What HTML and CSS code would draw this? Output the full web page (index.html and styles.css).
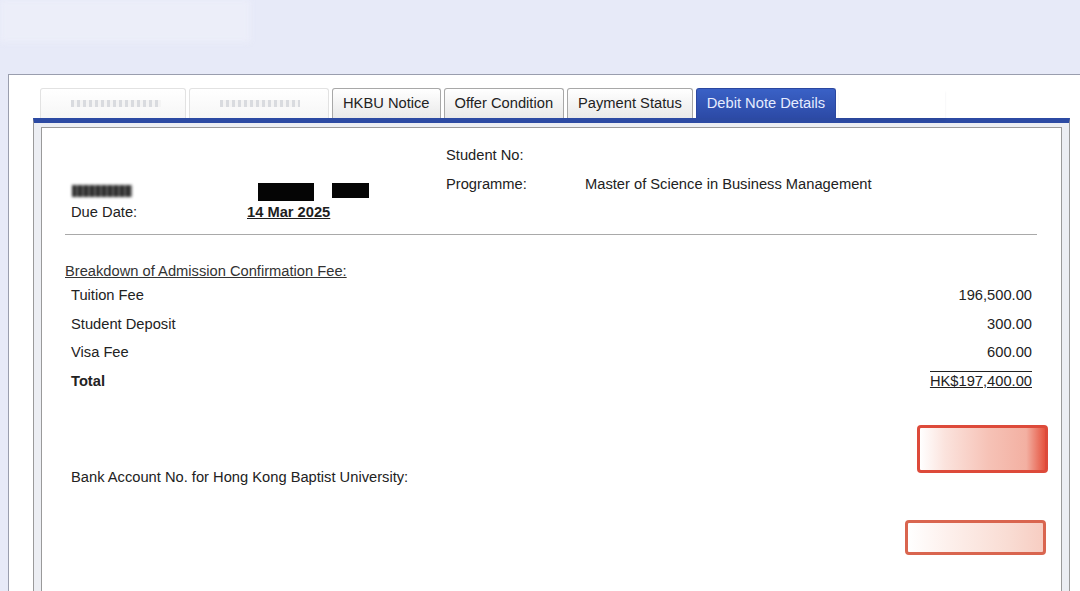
FILE: index.html
```html
<!DOCTYPE html>
<html lang="en">
<head>
  <meta charset="UTF-8">
  <meta name="viewport" content="width=device-width, initial-scale=1.0">
  <title>Debit Note Details</title>
  <link rel="stylesheet" href="styles.css">
</head>
<body>
  <div class="top">
    <div class="top-patch"></div>
  </div>

  <div class="frame">
    <div class="tabs">
      <span class="tab tab-hidden"><i class="smudge w90"></i></span>
      <span class="tab tab-hidden"><i class="smudge w80"></i></span>
      <span class="tab">HKBU Notice</span>
      <span class="tab">Offer Condition</span>
      <span class="tab">Payment Status</span>
      <span class="tab active">Debit Note Details</span>
      <span class="tab-ghost"></span>
    </div>

    <div class="tab-content">
      <div class="panel">
        <div class="head">
          <div class="head-left">
            <div class="head-row">
              <div class="name-blur"></div>
              <div class="redacts">
                <span class="redact r1"></span>
                <span class="redact r2"></span>
              </div>
            </div>
            <div class="head-row due">
              <span class="label">Due Date:</span>
              <span class="date">14 Mar 2025</span>
            </div>
          </div>
          <div class="head-right">
            <div class="info-row"><span class="info-label">Student No:</span><span></span></div>
            <div class="info-row"><span class="info-label">Programme:</span><span>Master of Science in Business Management</span></div>
          </div>
        </div>

        <hr class="rule">

        <div class="breakdown-title">Breakdown of Admission Confirmation Fee:</div>
        <div class="fees">
          <div class="fee-row"><span>Tuition Fee</span><span>196,500.00</span></div>
          <div class="fee-row"><span>Student Deposit</span><span>300.00</span></div>
          <div class="fee-row"><span>Visa Fee</span><span>600.00</span></div>
          <div class="fee-row total"><span>Total</span><span class="total-amount">HK$197,400.00</span></div>
        </div>

        <div class="bank">
          <div class="bank-label">Bank Account No. for Hong Kong Baptist University:</div>
          <div class="stamps">
            <div class="stamp s1"></div>
            <div class="stamp s2"></div>
          </div>
        </div>
      </div>
    </div>
  </div>
</body>
</html>
```

FILE: styles.css
```css
body{
  margin: 0;
  background: #e7eaf8;
  font-family: "Liberation Sans", Arial, sans-serif;
  font-size: 14.7px;
  color: #222;
  overflow: hidden;
}

.top{
  height: 74px;
}
.top .top-patch{
  width: 250px;
  height: 42px;
  background: #eceef9;
  filter: blur(3px);
}

.frame{
  margin-left: 8px;
  border: 1px solid #9a9eae;
  border-right: none;
  background: #fff;
  padding: 13px 10px 0 24px;
  height: 560px;
}

.tabs{
  display: flex;
  align-items: flex-end;
  gap: 3px;
  padding-left: 7px;
  height: 30px;
}

.tabs .tab{
  height: 29px;
  line-height: 29px;
  padding: 0 10px;
  border: 1px solid #a8a8a8;
  border-bottom: none;
  border-radius: 3px 3px 0 0;
  background: linear-gradient(#ffffff, #e9e9e9);
  color: #222;
  white-space: nowrap;
}

.tabs .tab.active{
  background: linear-gradient(#3a61c6, #2c4aa6);
  border-color: #2b47a0;
  color: #e6ecff;
}

.tabs .tab-hidden{
  width: 124px;
  border-color: #e2e2e2;
  background: linear-gradient(#ffffff, #f6f6f6);
  display: flex;
  align-items: center;
}
.tabs .tab-hidden + .tab-hidden{
  width: 118px;
}

.smudge{
  display: block;
  height: 7px;
  background: repeating-linear-gradient(90deg, #d9dbdf 0 3px, #f4f4f4 3px 6px);
  filter: blur(0.7px);
  margin-left: 20px;
}
.smudge.w90{ width: 90px; }
.smudge.w80{ width: 80px; }

.tabs .tab-ghost{
  width: 106px;
  height: 28px;
  background: #fff;
  box-shadow: 0 2px 2px rgba(40, 40, 60, 0.08);
}

.tab-content{
  border-top: 5px solid #2c4aa3;
  border-left: 1px solid #9a9a9a;
  border-right: 1px solid #9a9a9a;
  background: #eceef3;
  padding: 4px 7px 0 7px;
  height: 520px;
}

.panel{
  background: #fff;
  border: 1px solid #9a9a9a;
  height: 100%;
  padding: 1px 24px 0 23px;
}

.head{
  display: flex;
  height: 105px;
}

.head-left{
  width: 381px;
  padding-top: 53px;
}

.head-row{
  display: flex;
  height: 22px;
  align-items: center;
}
.head-row.due{
  height: 16px;
  line-height: 16px;
}

.name-blur{
  width: 60px;
  height: 12px;
  margin-left: 7px;
  margin-top: -4px;
  background: repeating-linear-gradient(90deg, #2a2a2a 0 4px, #666 4px 6px);
  filter: blur(1.4px);
}

.redacts{
  display: flex;
  gap: 18px;
  margin-left: 126px;
  align-items: flex-start;
  height: 22px;
  padding-top: 2px;
}
.redact{
  display: block;
  background: #050505;
}
.redact.r1{ width: 56px; height: 18px; }
.redact.r2{ width: 37px; height: 15px; }

.head-row .label{
  width: 176px;
  padding-left: 6px;
}
.head-row .date{
  font-weight: bold;
  text-decoration: underline;
  color: #1e1e1e;
}

.head-right{
  padding-top: 12px;
}
.info-row{
  display: flex;
  height: 29px;
  line-height: 29px;
}
.info-label{
  width: 139px;
}

.rule{
  border: none;
  border-top: 1px solid #a9a9a9;
  margin: 0;
}

.breakdown-title{
  margin-top: 26px;
  line-height: 20px;
  text-decoration: underline;
  color: #333;
}

.fees .fee-row{
  display: flex;
  justify-content: space-between;
  height: 28.5px;
  line-height: 28.5px;
  padding: 0 5px 0 6px;
}
.fees .fee-row.total span:first-child{
  font-weight: bold;
}
.total-amount{
  text-decoration: underline;
  line-height: 18px;
  align-self: center;
  border-top: 1px solid #222;
}

.bank{
  display: flex;
  justify-content: space-between;
  margin-top: 30px;
  margin-right: -11px;
}
.bank-label{
  padding: 44px 0 0 6px;
  line-height: 16px;
}

.stamps{
  display: flex;
  flex-direction: column;
  align-items: flex-end;
  gap: 47px;
}
.stamp{
  border: 3px solid #dd4a3a;
  border-radius: 4px;
  background: linear-gradient(90deg, #fff 0%, #fbe3dd 20%, #f6c2b6 55%, #f3b0a2 85%, #e5533f 100%);
}
.stamp.s1{
  width: 125px;
  height: 42px;
}
.stamp.s2{
  width: 135px;
  height: 29px;
  margin-right: 2px;
  border-color: #d9654f;
  background: linear-gradient(90deg, #fff 0%, #fdf0ec 30%, #f9dcd3 75%, #f7cdc2 100%);
}
```
